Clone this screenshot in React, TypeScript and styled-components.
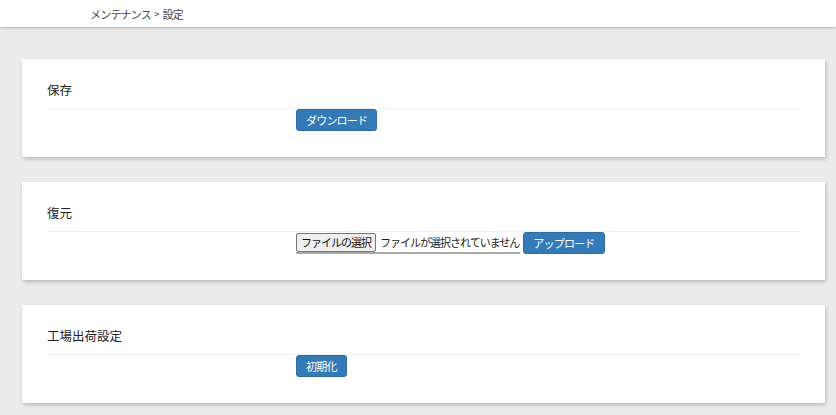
import React from 'react';
import styled, { createGlobalStyle } from 'styled-components';

const GlobalStyle = createGlobalStyle`
  html, body { margin: 0; padding: 0; background: #ececec; }
  body {
    font-family: "Noto Sans CJK JP", "Noto Sans", sans-serif;
    color: #333;
  }
`;

// ── Header ────────────────────────────────────────────────────
const Header = styled.header`
  height: 27px;
  background: #fff;
  box-shadow: 0 1px 3px rgba(0,0,0,0.25);
  display: flex;
  align-items: center;
  padding-left: 90px;
  font-size: 11px;
  color: #444;
  position: relative;
  z-index: 1;
`;

const Crumb = styled.span`
  letter-spacing: -0.8px;
`;

const Sep = styled.span`
  margin: 0 3px;
  font-size: 10px;
`;

const Main = styled.main`
  padding: 32px 11px 12px 22px;
  display: flex;
  flex-direction: column;
  gap: 25px;
`;

// ── Panels ────────────────────────────────────────────────────
const Panel = styled.section`
  background: #fff;
  box-shadow: 1px 2px 4px rgba(0,0,0,0.22);
  padding: 0 25px 26px;
`;

const PanelTitle = styled.h2`
  margin: 0;
  padding: 22px 0 9px;
  font-size: 12.5px;
  font-weight: normal;
  line-height: 18px;
  color: #222;
  border-bottom: 1px solid #eee;
`;

const Row = styled.div`
  display: flex;
  align-items: flex-start;
  height: 22px;
  gap: 3px;
  padding-left: 249px;
`;

const Button = styled.button`
  height: 22px;
  padding: 0 9px;
  background: #337ab7;
  border: 1px solid #2e6da4;
  border-radius: 3px;
  color: #fff;
  font-family: inherit;
  font-size: 11px;
  letter-spacing: -0.8px;
  line-height: 20px;
  cursor: pointer;
`;

const FileField = styled.label`
  display: inline-flex;
  align-items: center;
  height: 20px;
  border-bottom: 2px solid #aaa;
  padding-right: 1px;
  font-size: 11px;
  letter-spacing: -1px;
  color: #222;
`;

const FileButton = styled.span`
  height: 17px;
  line-height: 17px;
  padding: 0 4px;
  background: #efefef;
  border: 1px solid #767676;
  border-radius: 2px;
  color: #111;
`;

const FileText = styled.span`
  margin-left: 4px;
`;

export default function App() {
  return (
    <>
      <GlobalStyle />
      <Header>
        <Crumb>メンテナンス</Crumb>
        <Sep>&gt;</Sep>
        <Crumb>設定</Crumb>
      </Header>
      <Main>
        <Panel>
          <PanelTitle>保存</PanelTitle>
          <Row>
            <Button>ダウンロード</Button>
          </Row>
        </Panel>
        <Panel>
          <PanelTitle>復元</PanelTitle>
          <Row>
            <FileField>
              <FileButton>ファイルの選択</FileButton>
              <FileText>ファイルが選択されていません</FileText>
            </FileField>
            <Button>アップロード</Button>
          </Row>
        </Panel>
        <Panel>
          <PanelTitle>工場出荷設定</PanelTitle>
          <Row>
            <Button>初期化</Button>
          </Row>
        </Panel>
      </Main>
    </>
  );
}
